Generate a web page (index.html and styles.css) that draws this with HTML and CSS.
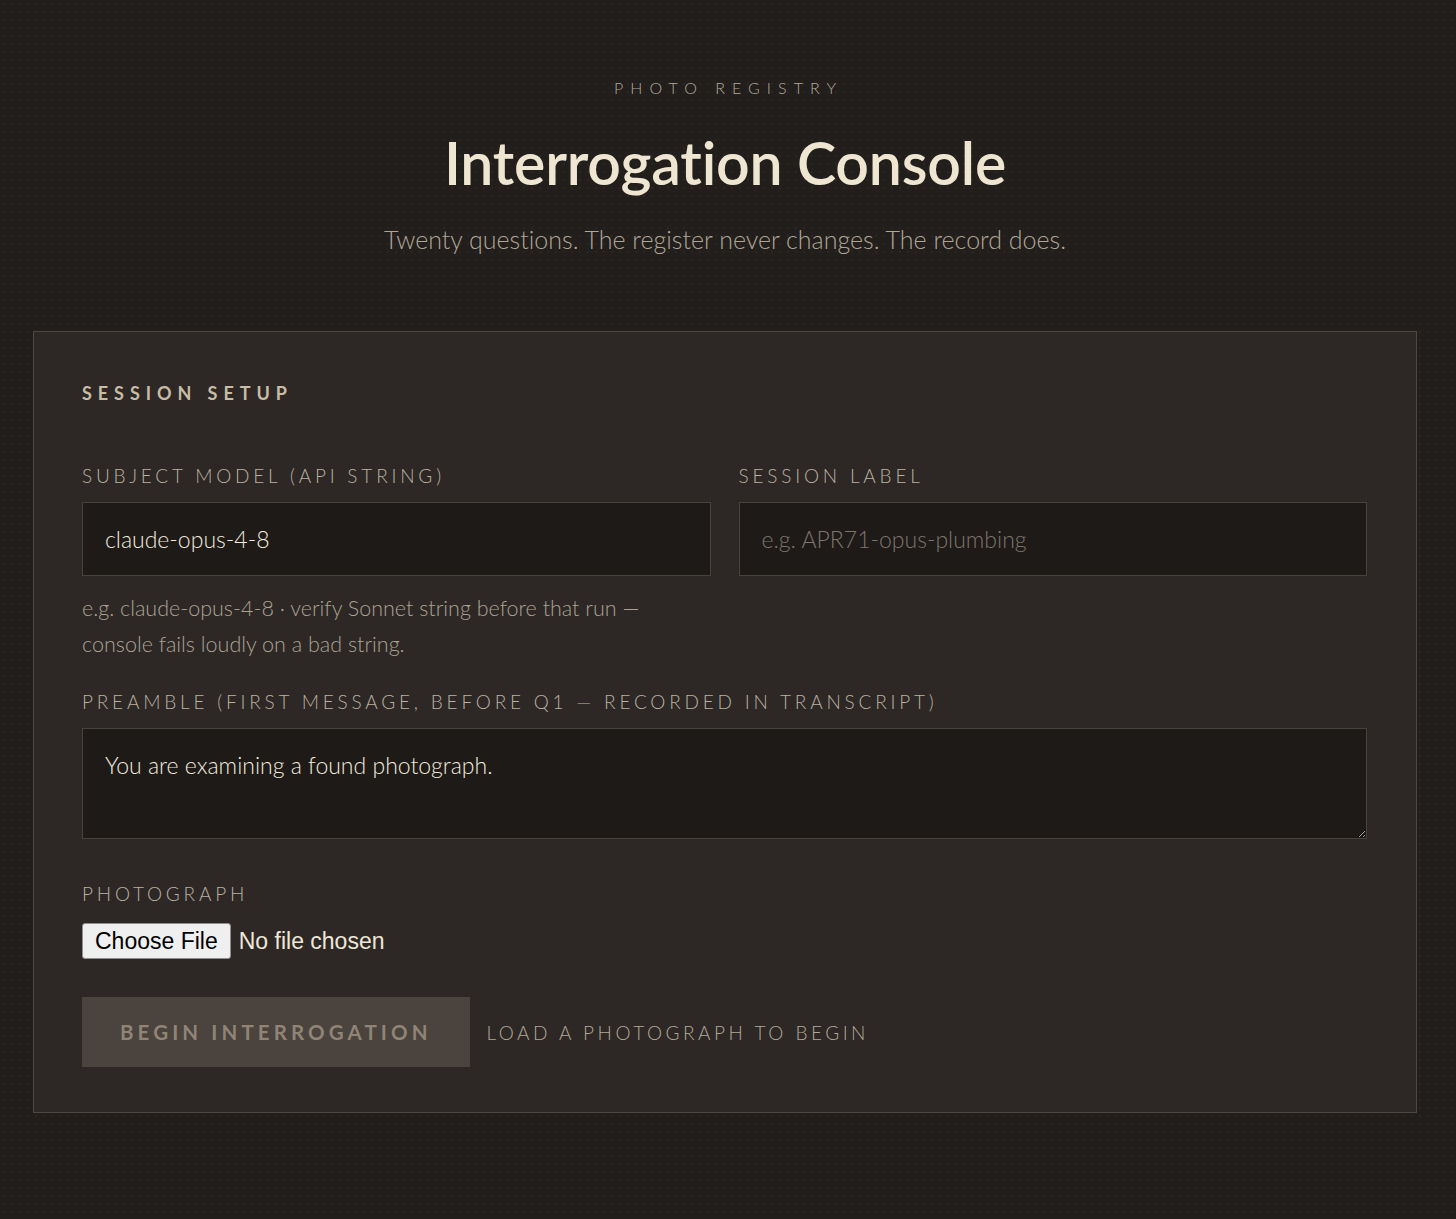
FILE: index.html
```html
<!DOCTYPE html>
<html lang="en">
<head>
<meta charset="utf-8">
<title>Interrogation Console</title>
<link rel="stylesheet" href="styles.css">
</head>
<body>
<div class="page">
  <header class="masthead">
    <div class="eyebrow">Photo Registry</div>
    <h1 class="title">Interrogation Console</h1>
    <p class="subtitle">Twenty questions. The register never changes. The record does.</p>
  </header>

  <section class="panel">
    <h2 class="panel-title">Session Setup</h2>

    <div class="grid">
      <div class="field">
        <label class="label" for="model">Subject model (API string)</label>
        <input class="input" id="model" type="text" value="claude-opus-4-8">
        <p class="hint">e.g. claude-opus-4-8 · verify Sonnet string before that run — console fails loudly on a bad string.</p>
      </div>
      <div class="field">
        <label class="label" for="sess">Session label</label>
        <input class="input" id="sess" type="text" placeholder="e.g. APR71-opus-plumbing">
      </div>
    </div>

    <div class="field field-wide">
      <label class="label" for="pre">Preamble (first message, before Q1 — recorded in transcript)</label>
      <textarea class="input textarea" id="pre">You are examining a found photograph.</textarea>
    </div>

    <div class="field field-photo">
      <label class="label" for="photo">Photograph</label>
      <input class="file" id="photo" type="file">
    </div>

    <div class="actions">
      <button class="btn" type="button" disabled>Begin Interrogation</button>
      <span class="status">Load a photograph to begin</span>
    </div>
  </section>
</div>
</body>
</html>
```

FILE: styles.css
```css
* { box-sizing: border-box; }

html, body {
  margin: 0;
  padding: 0;
}

body {
  background-color: #221e1c;
  background-image: radial-gradient(rgba(255, 255, 255, 0.035) 1px, transparent 1.2px);
  background-size: 8px 8px;
  font-family: "Lato", "Noto Sans", sans-serif;
  font-variant-ligatures: none;
  color: #e9e0cc;
  min-height: 1219px;
}

.page {
  padding: 0 39px 0 33px;
}

.masthead {
  text-align: center;
  padding-top: 77px;
}

.eyebrow {
  font-size: 16px;
  line-height: 22px;
  letter-spacing: 0.44em;
  text-transform: uppercase;
  color: #b0a899;
  font-weight: 300;
  margin-right: -0.44em;
}

.title {
  margin: 28px 0 0;
  font-size: 59px;
  line-height: 72px;
  font-weight: 600;
  color: #efe6d2;
  letter-spacing: -0.2px;
}

.subtitle {
  margin: 24px 0 0;
  font-size: 25px;
  line-height: 32px;
  font-weight: 300;
  color: #b0a696;
}

.panel {
  margin-top: 76px;
  background: #2d2826;
  border: 1px solid #4f4842;
  padding: 49px 49px 45px 48px;
}

.panel-title {
  margin: 0;
  font-size: 18px;
  line-height: 24px;
  font-weight: 700;
  letter-spacing: 0.33em;
  text-transform: uppercase;
  color: #c8bca4;
}

.grid {
  display: grid;
  grid-template-columns: 1fr 1fr;
  column-gap: 28px;
  margin-top: 59px;
}

.field {
  display: flex;
  flex-direction: column;
}

.label {
  font-size: 19px;
  line-height: 24px;
  font-weight: 300;
  letter-spacing: 0.2em;
  text-transform: uppercase;
  color: #bbb1a0;
}

.input {
  margin-top: 14px;
  height: 74px;
  width: 100%;
  background: #1e1a18;
  border: 1px solid #48423c;
  border-radius: 0;
  padding: 0 22px;
  font-family: "Lato", "Noto Sans", sans-serif;
  font-size: 23px;
  font-weight: 300;
  color: #f2ebdd;
  outline: none;
}

.input::placeholder {
  color: #7d756c;
}

.hint {
  margin: 14px 0 0;
  font-size: 21.5px;
  line-height: 36px;
  font-weight: 300;
  color: #aca292;
  padding-right: 30px;
}

.field-wide {
  margin-top: 28px;
}

.textarea {
  display: block;
  height: 111px;
  padding: 20px 22px;
  line-height: 32px;
  resize: vertical;
}

.field-photo {
  margin-top: 43px;
  align-items: flex-start;
}

.file {
  margin-top: 17px;
  font-family: "Liberation Sans", Arial, sans-serif;
  font-size: 23px;
  color: #efe7d6;
}

.file::file-selector-button {
  font: inherit;
  height: 36px;
  padding: 0 12px;
  margin-right: 8px;
  background: #efefef;
  color: #000;
  border: 1px solid #8f8f8f;
  border-radius: 3px;
}

.actions {
  display: flex;
  align-items: center;
  gap: 17px;
  margin-top: 38px;
}

.btn {
  height: 70px;
  padding: 0 38px;
  background: #4a433e;
  border: none;
  border-radius: 0;
  font-family: "Lato", "Noto Sans", sans-serif;
  font-size: 20.5px;
  font-weight: 700;
  letter-spacing: 0.2em;
  text-transform: uppercase;
  color: #908575;
  cursor: not-allowed;
}

.status {
  font-size: 19px;
  font-weight: 300;
  letter-spacing: 0.185em;
  text-transform: uppercase;
  color: #b2a795;
}
```
